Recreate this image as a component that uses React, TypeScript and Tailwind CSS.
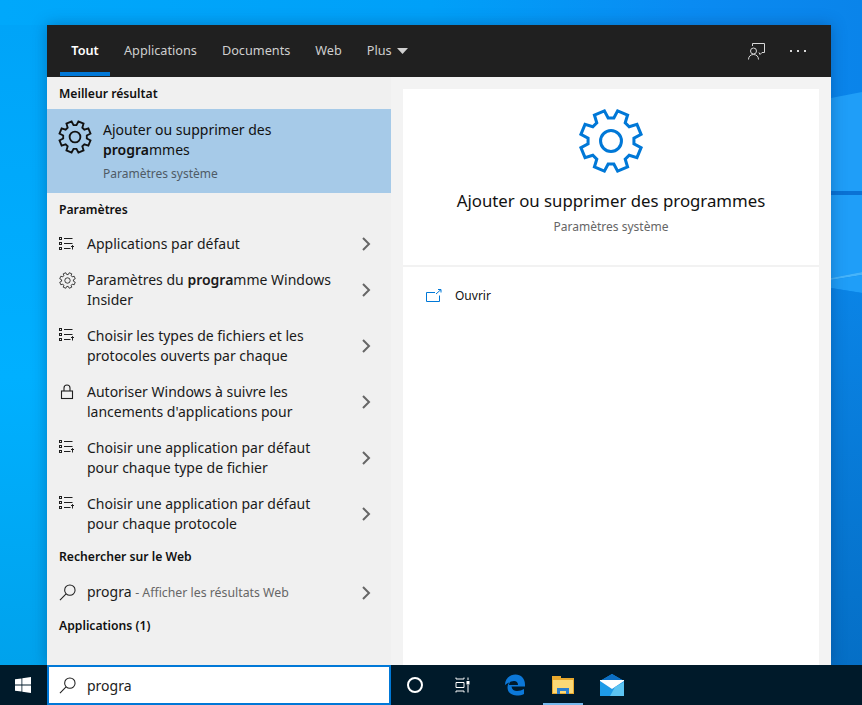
const font = "font-['Noto_Sans','Open_Sans',sans-serif]";

// 8 tooth outline, a notch sits at the top like the Windows settings glyph
function gearPath() {
  const pts: string[] = [];
  for (let i = 0; i < 8; i++) {
    const a = (Math.PI / 4) * i + Math.PI / 8;
    const offs: [number, number][] = [
      [-0.2, 8.4],
      [-0.13, 11.2],
      [0.13, 11.2],
      [0.2, 8.4],
    ];
    for (const [d, r] of offs) {
      const x = 12 + r * Math.sin(a + d * 1.35);
      const y = 12 - r * Math.cos(a + d * 1.35);
      pts.push(`${x.toFixed(2)} ${y.toFixed(2)}`);
    }
  }
  return `M${pts.join("L")}Z`;
}

function Gear({ size, stroke, color }: { size: number; stroke: number; color: string }) {
  return (
    <svg width={size} height={size} viewBox="0 0 24 24" fill="none" stroke={color} strokeWidth={stroke} strokeLinejoin="miter">
      <path d={gearPath()} />
      <circle cx="12" cy="12" r="3.8" />
    </svg>
  );
}

function ListIcon() {
  return (
    <svg width="16" height="14" viewBox="0 0 16 14" fill="none" stroke="#1f1f1f" strokeWidth="1">
      <rect x="0.5" y="0.5" width="2" height="2" fill="#f0f0f0" />
      <rect x="0.5" y="5.5" width="2" height="2" fill="#f0f0f0" />
      <rect x="0.5" y="10.5" width="2" height="2" fill="#f0f0f0" />
      <path d="M5 1.5h8.500M5 6.500h8.500M5 11.500h6.500M13.500 12.500v-4M12 10l1.500-1.500L15 10" />
    </svg>
  );
}

function LockIcon() {
  return (
    <svg width="14" height="16" viewBox="0 0 14 16" fill="none" stroke="#1f1f1f" strokeWidth="1.1">
      <rect x="1.500" y="7" width="11" height="7.500" />
      <path d="M4 7V4a3 3 0 0 1 6 0V7" />
    </svg>
  );
}

function Search({ size }: { size: number }) {
  return (
    <svg width={size} height={size} viewBox="0 0 18 18" fill="none" stroke="#1f1f1f" strokeWidth="1.1">
      <circle cx="11.500" cy="6.500" r="5.500" />
      <path d="M7.500 10.500L1 17" />
    </svg>
  );
}

function Chevron() {
  return (
    <svg width="10" height="14" viewBox="0 0 10 14" fill="none" stroke="#666" strokeWidth="2">
      <path d="M2 1l6 6-6 6" />
    </svg>
  );
}

function Row({ icon, children, tall, className }: { icon: React.ReactNode; children: React.ReactNode; tall?: boolean; className?: string }) {
  return (
    <div className={`flex items-center pr-[20px] ${tall ? "h-[56px]" : ""} ${className ?? ""}`}>
      <div className={`w-[40px] shrink-0 flex justify-center ${tall ? "self-start pt-[10px]" : ""}`}>{icon}</div>
      <div className="flex-1 text-[14px] leading-[20px] text-[#1a1a1a]">
        <div className="max-w-[250px]">{children}</div>
      </div>
      <Chevron />
    </div>
  );
}

function SectionTitle({ children, className }: { children: React.ReactNode; className?: string }) {
  return <div className={`pl-[12px] text-[12.200px] font-semibold text-[#111] flex items-center ${className ?? ""}`}>{children}</div>;
}

function Wallpaper() {
  return (
    <svg className="absolute left-0 top-0" width="862" height="665" viewBox="0 0 862 665">
      <defs>
        <linearGradient id="top" x1="0" x2="1" y1="0" y2="0">
          <stop offset="0" stopColor="#00a8fb" />
          <stop offset="0.5" stopColor="#00a0f8" />
          <stop offset="0.8" stopColor="#0a8bf2" />
          <stop offset="1" stopColor="#0a84ea" />
        </linearGradient>
        <linearGradient id="left" x1="0" x2="0" y1="0" y2="1">
          <stop offset="0" stopColor="#00a4f8" />
          <stop offset="0.55" stopColor="#00b0ff" />
          <stop offset="1" stopColor="#00a2ec" />
        </linearGradient>
        <linearGradient id="low" x1="0" x2="0" y1="0" y2="1">
          <stop offset="0" stopColor="#0a84e6" />
          <stop offset="1" stopColor="#056fc6" />
        </linearGradient>
      </defs>
      <rect width="862" height="665" fill="url(#top)" />
      <rect y="25" width="47" height="640" fill="url(#left)" />
      <path d="M831 98L862 92V272L831 278Z" fill="#1f9ef8" />
      <path d="M831 191H862V195H831Z" fill="#0a72d4" />
      <path d="M831 278L862 272V275L831 280Z" fill="#46b4fa" />
      <path d="M831 280L862 275V293L831 288Z" fill="#1f9ef8" />
      <path d="M831 288L862 293V665H831Z" fill="url(#low)" />
    </svg>
  );
}

export default function App() {
  return (
    <div className={`${font} w-[862px] h-[705px] flex flex-col overflow-hidden relative bg-[#00a4f8]`}>
      <Wallpaper />
      <div className="flex-1 min-h-0 pl-[47px] pt-[25px] relative">
        <div className="w-[784px] h-full flex flex-col shadow-[0_0_14px_rgba(0,40,90,0.35)]">
          <div className="h-[52px] bg-[#202020] flex items-stretch pl-[13px] pr-[25px] text-[12.700px] text-[#cfcfcf]">
            <div className="relative w-[50px] flex items-center justify-center font-semibold text-white">
              Tout
              <div className="absolute bottom-[1px] left-0 right-0 h-[4px] bg-[#0078d7]" />
            </div>
            <div className="ml-[14px] flex items-center">Applications</div>
            <div className="ml-[25px] flex items-center">Documents</div>
            <div className="ml-[25px] flex items-center">Web</div>
            <div className="ml-[25px] flex items-center gap-[5px]">
              Plus
              <svg width="11" height="6" viewBox="0 0 11 6"><path d="M0 0h11L5.500 6z" fill="#d0d0d0" /></svg>
            </div>
            <div className="ml-auto flex items-center gap-[25px]">
              <svg width="17" height="17" viewBox="0 0 17 17" fill="none" stroke="#d8d8d8" strokeWidth="1">
                <path d="M4.500 3V.5H16.500V9.500H14l-2 2-1-2" />
                <circle cx="5.500" cy="8" r="3" />
                <path d="M.5 16.500c0-3 2-5 5-5s5 2 5 5" />
              </svg>
              <div className="flex gap-[5px]">
                <div className="w-[2px] h-[2px] bg-[#d8d8d8]" />
                <div className="w-[2px] h-[2px] bg-[#d8d8d8]" />
                <div className="w-[2px] h-[2px] bg-[#d8d8d8]" />
              </div>
            </div>
          </div>
          <div className="flex-1 min-h-0 flex bg-[#f3f3f3]">
            <div className="w-[344px] bg-[#f0f0f0] flex flex-col">
              <SectionTitle className="h-[32px] pt-[2px]">Meilleur résultat</SectionTitle>
              <div className="h-[84px] bg-[#a6cae8] flex">
                <div className="w-[56px] pl-[11px] pt-[11px] shrink-0">
                  <Gear size={34} stroke={1.3} color="#111" />
                </div>
                <div className="pt-[11px] text-[14px] leading-[20px] text-[#111]">
                  <div>Ajouter ou supprimer des</div>
                  <div><b className="font-semibold">progra</b>mmes</div>
                  <div className="mt-[4px] text-[12px] text-[#4f5b66]">Paramètres système</div>
                </div>
              </div>
              <SectionTitle className="h-[33px] pt-[2px]">Paramètres</SectionTitle>
              <Row className="h-[36px]" icon={<ListIcon />}>Applications par défaut</Row>
              <Row tall icon={<Gear size={17} stroke={1.2} color="#1f1f1f" />}>
                Paramètres du <b className="font-semibold">progra</b>mme Windows Insider
              </Row>
              <Row tall icon={<ListIcon />}>Choisir les types de fichiers et les protocoles ouverts par chaque</Row>
              <Row tall icon={<LockIcon />}>Autoriser Windows à suivre les lancements d'applications pour</Row>
              <Row tall icon={<ListIcon />}>Choisir une application par défaut pour chaque type de fichier</Row>
              <Row tall icon={<ListIcon />}>Choisir une application par défaut pour chaque protocole</Row>
              <SectionTitle className="h-[31px]">Rechercher sur le Web</SectionTitle>
              <Row className="h-[39px]" icon={<Search size={17} />}>
                <div className="whitespace-nowrap">
                  progra <span className="text-[12.300px] text-[#666]">- Afficher les résultats Web</span>
                </div>
              </Row>
              <SectionTitle className="h-[29px]">Applications (1)</SectionTitle>
            </div>
            <div className="ml-[12px] mt-[12px] w-[416px] bg-white flex flex-col">
              <div className="h-[178px] flex flex-col items-center border-b-2 border-[#f2f2f2]">
                <div className="mt-[19px]"><Gear size={66} stroke={1.1} color="#0078d7" /></div>
                <div className="mt-[15px] text-[16.800px] leading-[24px] text-[#111]">Ajouter ou supprimer des programmes</div>
                <div className="mt-[5px] text-[12px] text-[#666]">Paramètres système</div>
              </div>
              <div className="flex items-center h-[58px] pl-[23px] text-[12px] text-[#111]">
                <svg width="16" height="14" viewBox="0 0 16 14" fill="none" stroke="#0078d7" strokeWidth="1">
                  <path d="M9 3.500H.5v9h13v-6M10 5l5-4.500M12 .5h3v3" />
                </svg>
                <span className="ml-[13px]">Ouvrir</span>
              </div>
            </div>
          </div>
        </div>
      </div>
      <div className="h-[40px] bg-[#001a2a] flex items-stretch relative">
        <div className="w-[47px] flex items-center justify-center pr-[1px]">
          <svg width="16" height="16" viewBox="0 0 16 16" fill="#fff">
            <path d="M0 2.300L6.500 1.400V7.600H0ZM7.300 1.300L16 0V7.600H7.300ZM0 8.400H6.500V14.600L0 13.700ZM7.300 8.400H16V16L7.300 14.700Z" />
          </svg>
        </div>
        <div className="w-[344px] bg-white border-2 border-[#0078d7] flex items-center text-[14px] text-[#222]">
          <div className="ml-[10px]"><Search size={17} /></div>
          <span className="ml-[11px]">progra</span>
        </div>
        <div className="w-[48px] flex items-center justify-center">
          <div className="w-[16px] h-[16px] rounded-full border-2 border-white" />
        </div>
        <div className="w-[48px] flex items-center justify-center">
          <svg width="16" height="16" viewBox="0 0 16 16" fill="none" stroke="#fff" strokeWidth="1">
            <path d="M1 .5v1.500h8V.5M1 15.500V14h8v1.500M1 5.500h8v5H1zM13 .5v2.500M13 8v7.500" />
            <rect x="12" y="4.500" width="2" height="2.500" fill="#fff" />
          </svg>
        </div>
        <div className="w-[56px] flex items-center justify-center">
          <svg width="22" height="22" viewBox="0 0 22 22">
            <path d="M1 11C1 4.500 6 .5 11.500.5c5.500 0 9.500 4 9.500 10v2H7.500c.3 3 2.800 4.500 5.500 4.500 2.600 0 5-.8 7-2v5c-2 1-4.500 1.500-7.500 1.500-5 0-9-3-9-8 0-3 1.500-5.500 4-7-1.500 1.300-2.300 2.800-2.500 4.500h9c0-2.500-1.500-4-4-4-3 0-7 2.500-9.500 4.500Z" fill="#0c78d8" />
          </svg>
        </div>
        <div className="w-[40px] flex items-center justify-center relative">
          <svg width="22" height="20" viewBox="0 0 22 20">
            <path d="M0 1h9v2h13v16H0Z" fill="#e8a92e" />
            <path d="M1 5h20v13H1Z" fill="#fbd976" />
            <path d="M5 19v-6h12v6h-3v-3H8v3Z" fill="#2a7fd0" />
          </svg>
          <div className="absolute bottom-0 left-0 right-0 h-[2px] bg-[#76b9ed]" />
        </div>
        <div className="w-[58px] flex items-center justify-center">
          <svg width="24" height="22" viewBox="0 0 24 22">
            <path d="M0 7L12 0l12 7v15H0Z" fill="#1e9be8" />
            <path d="M0 7L12 0l12 7-12 8Z" fill="#0c6fc4" />
            <path d="M0 6h24v1L12 15 0 7Z" fill="#fff" />
            <path d="M24 8v14H10l5-9Z" fill="#5cc4f2" />
          </svg>
        </div>
      </div>
    </div>
  );
}
